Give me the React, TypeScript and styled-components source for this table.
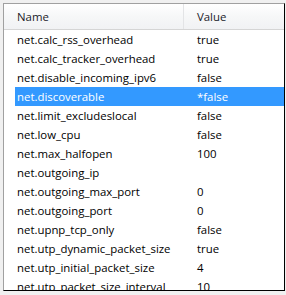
import React from "react";
import styled, { createGlobalStyle } from "styled-components";

const Global = createGlobalStyle`
  html, body { margin: 0; padding: 0; background: #f0f0f0; }
  body { width: 286px; height: 295px; overflow: hidden; }
`;

const Frame = styled.div`
  box-sizing: border-box;
  margin: 3px 0 0 3px;
  width: 282px;
  height: 288px;
  border: 1px solid;
  border-color: #a0a0a0 #000 #000 #a0a0a0;
  background: #fff;
  overflow: hidden;
  font-family: "Open Sans", "Noto Sans", sans-serif;
  font-size: 11.4px;
  color: #000;
`;

const Header = styled.div`
  display: grid;
  grid-template-columns: 180px 1fr;
  height: 25px;
  background: linear-gradient(#ffffff, #f6f7f8 50%, #f1f2f4);
  border-bottom: 1px solid #d5d5d5;
`;

const HeaderCell = styled.div<{ $divider?: boolean }>`
  display: flex;
  align-items: center;
  padding-left: 13px;
  color: #1b1b2a;
  border-right: ${(p) => (p.$divider ? "1px solid #e3e4e6" : "none")};
`;

const List = styled.div`
  display: flex;
  flex-direction: column;
`;

const Row = styled.div<{ $selected?: boolean }>`
  display: grid;
  grid-template-columns: 169px 1fr;
  height: 19px;
  margin-left: 11px;
  align-items: center;
  background: ${(p) => (p.$selected ? "#3399ff" : "transparent")};
  color: ${(p) => (p.$selected ? "#fff" : "#000")};
  flex-shrink: 0;
`;

const Cell = styled.div<{ $value?: boolean }>`
  padding-left: ${(p) => (p.$value ? "13px" : "2px")};
  white-space: nowrap;
  overflow: hidden;
`;

const rows: [string, string][] = [
  ["net.calc_rss_overhead", "true"],
  ["net.calc_tracker_overhead", "true"],
  ["net.disable_incoming_ipv6", "false"],
  ["net.discoverable", "*false"],
  ["net.limit_excludeslocal", "false"],
  ["net.low_cpu", "false"],
  ["net.max_halfopen", "100"],
  ["net.outgoing_ip", ""],
  ["net.outgoing_max_port", "0"],
  ["net.outgoing_port", "0"],
  ["net.upnp_tcp_only", "false"],
  ["net.utp_dynamic_packet_size", "true"],
  ["net.utp_initial_packet_size", "4"],
  ["net.utp_packet_size_interval", "10"],
];

export default function App() {
  return (
    <>
      <Global />
      <Frame>
        <Header>
          <HeaderCell $divider>Name</HeaderCell>
          <HeaderCell>Value</HeaderCell>
        </Header>
        <List>
          {rows.map(([n, v], i) => (
            <Row key={n} $selected={i === 3}>
              <Cell>{n}</Cell>
              <Cell $value>{v}</Cell>
            </Row>
          ))}
        </List>
      </Frame>
    </>
  );
}
